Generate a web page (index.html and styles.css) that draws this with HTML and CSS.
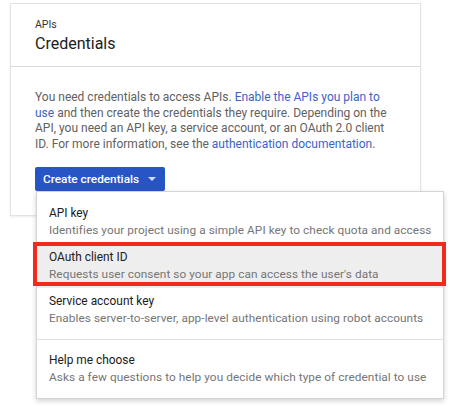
FILE: index.html
```html
<!DOCTYPE html>
<html>
<head>
<meta charset="utf-8">
<link rel="stylesheet" href="styles.css">
</head>
<body>
<div class="card">
  <div class="card-header">
    <div class="crumb">APIs</div>
    <div class="title">Credentials</div>
  </div>
  <div class="card-body">
    <p class="intro">You need credentials to access APIs. <a href="#">Enable the APIs you plan to use</a> and then create the credentials they require. Depending on the API, you need an API key, a service account, or an OAuth 2.0 client ID. For more information, see the <a href="#">authentication documentation</a>.</p>
    <div class="dropdown">
      <button class="btn">Create credentials <span class="caret"></span></button>
      <div class="menu">
        <div class="item">
          <div class="item-title">API key</div>
          <div class="item-desc">Identifies your project using a simple API key to check quota and access</div>
        </div>
        <div class="item item-active">
          <div class="item-title">OAuth client ID</div>
          <div class="item-desc">Requests user consent so your app can access the user's data</div>
        </div>
        <div class="item">
          <div class="item-title">Service account key</div>
          <div class="item-desc">Enables server-to-server, app-level authentication using robot accounts</div>
        </div>
        <div class="divider"></div>
        <div class="item">
          <div class="item-title">Help me choose</div>
          <div class="item-desc">Asks a few questions to help you decide which type of credential to use</div>
        </div>
      </div>
    </div>
  </div>
</div>
</body>
</html>
```
FILE: styles.css
```css
html, body {
  margin: 0;
  padding: 0;
  background: #ffffff;
}
html {
  min-height: 407px;
}
body {
  min-height: 404px;
  font-family: Roboto, "Liberation Sans", Arial, sans-serif;
  color: #212121;
  padding: 3px 0 0 10px;
}
.card {
  width: 409px;
  height: 211px;
  border: 1px solid #e3e3e3;
  box-shadow: 0 1px 2px rgba(0,0,0,0.08);
  background: #fff;
}
.card-header {
  height: 63px;
  border-bottom: 1px solid #dadada;
  padding: 0 24px;
  box-sizing: border-box;
  padding-top: 15px;
}
.crumb {
  font-size: 10.5px;
  line-height: 12px;
  color: #333;
}
.title {
  font-size: 16px;
  line-height: 20px;
  margin-top: 3px;
  color: #202020;
}
.card-body {
  padding: 23px 24px 0 24px;
}
.intro {
  margin: 0;
  font-size: 12px;
  line-height: 15.5px;
  color: #616161;
}
.intro a {
  color: #3a63c8;
  text-decoration: none;
}
.dropdown {
  position: relative;
  margin-top: 15px;
}
.btn {
  display: flex;
  align-items: center;
  height: 24px;
  width: 130px;
  padding: 0 0 0 8px;
  border: 0;
  border-radius: 2px;
  background: #2855c5;
  color: #fff;
  font-family: Roboto, "Liberation Sans", Arial, sans-serif;
  font-size: 11.8px;
  font-weight: 500;
  box-sizing: border-box;
}
.caret {
  display: inline-block;
  margin-left: 9px;
  width: 0;
  height: 0;
  border-left: 4px solid transparent;
  border-right: 4px solid transparent;
  border-top: 4px solid rgba(255,255,255,0.8);
}
.menu {
  position: absolute;
  top: 24px;
  left: 1px;
  width: 408px;
  box-sizing: border-box;
  padding: 8px 0 7px 0;
  background: #fff;
  border: 1px solid #d4d4d4;
  box-shadow: 0 2px 5px rgba(0,0,0,0.18);
  z-index: 2;
}
.item {
  position: relative;
  padding: 5px 12px;
}
.item-title {
  font-size: 11.9px;
  line-height: 17px;
  color: #212121;
}
.item-desc {
  font-size: 11.8px;
  line-height: 17px;
  letter-spacing: 0.07px;
  white-space: nowrap;
  color: #757575;
}
.item-active {
  background: #eeeeee;
}
.item-active::after {
  content: "";
  position: absolute;
  top: -2px;
  bottom: 2px;
  left: -4px;
  right: -3px;
  border: 4px solid #f22a1c;
}
.divider {
  height: 1px;
  background: #e0e0e0;
  margin: 7px 0;
}
```
